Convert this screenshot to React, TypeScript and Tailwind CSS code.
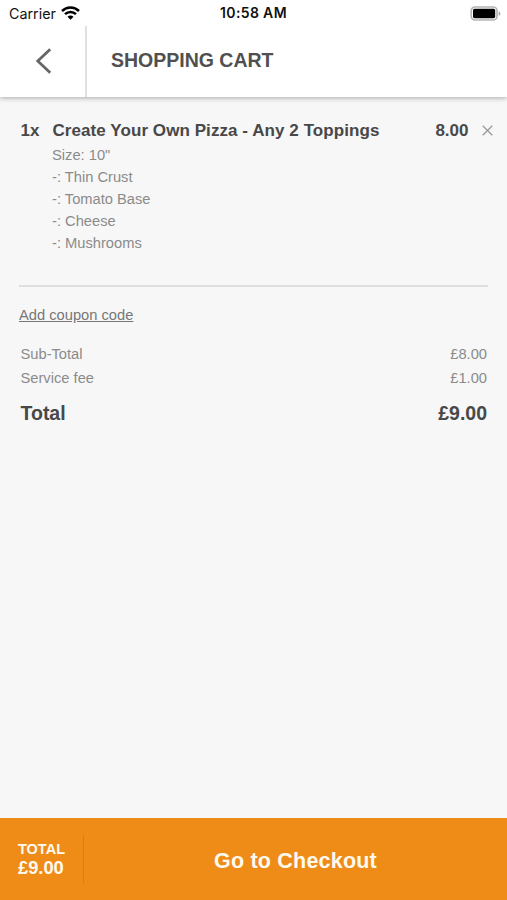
import React from 'react';

const options = ['Size: 10"', '-: Thin Crust', '-: Tomato Base', '-: Cheese', '-: Mushrooms'];

const fees = [
  { name: 'Sub-Total', amount: '£8.00' },
  { name: 'Service fee', amount: '£1.00' },
];

const total = '£9.00';

function WifiIcon() {
  return (
    <svg width="19" height="14" viewBox="0 0 19 14" fill="none" stroke="#000" strokeWidth="2.5">
      <path d="M1 5C5.8.4 13.2.4 18 5" />
      <path d="M4 8.2C7.1 5.2 11.9 5.2 15 8.2" />
      <path d="M6.5 10.7C8.2 9.2 10.8 9.2 12.5 10.7L9.5 13.7Z" fill="#000" stroke="none" />
    </svg>
  );
}

function BatteryIcon() {
  return (
    <svg width="32" height="15" viewBox="0 0 32 15">
      <rect x="1.2" y="1" width="25.8" height="13" rx="3.8" fill="#fff" stroke="#b4b4b4" strokeWidth="1.7" />
      <rect x="3" y="2.8" width="22.2" height="9.4" rx="1.6" fill="#000" />
      <path d="M28.6 5.2C31 6 31 9 28.6 9.8Z" fill="#aaa" />
    </svg>
  );
}

function StatusBar() {
  return (
    <div className="grid h-[26px] grid-cols-[1fr_auto_1fr] items-center px-[5px] font-['Inter',sans-serif] text-[14.3px] text-[#111]">
      <div className="flex items-center gap-[5px] pl-1">
        <span className="pt-[2px] leading-5">Carrier</span>
        <WifiIcon />
      </div>
      <span className="text-[14px] leading-5 font-semibold tracking-[0.35px] whitespace-nowrap">10:58 AM</span>
      <div className="flex justify-end">
        <BatteryIcon />
      </div>
    </div>
  );
}

export default function App() {
  return (
    <div className="flex h-[900px] w-[507px] flex-col overflow-hidden bg-[#f7f7f7] font-['Liberation_Sans',Arial,sans-serif] text-[#484848]">
      <header className="z-10 h-[97px] shrink-0 bg-white shadow-[0_1px_5px_rgba(0,0,0,0.32)]">
        <StatusBar />
        <div className="flex h-[71px]">
          <button className="flex h-full w-[87px] border-r-2 border-[#e0e0e0] pt-[22px] pl-[35px]">
            <svg width="18" height="26" viewBox="0 0 18 26" fill="none" stroke="#666" strokeWidth="2.8">
              <path d="M15.2 1.3L2.8 13L15.2 24.7" />
            </svg>
          </button>
          <h1 className="pt-[22px] pl-6 text-[19.5px] leading-6 font-bold text-[#505050]">SHOPPING CART</h1>
        </div>
      </header>

      <main className="flex-1 px-[19px] pt-[23px]">
        <section className="h-[165px]">
          <div className="flex items-center text-[17px] leading-[22px] font-bold">
            <span className="w-[33.5px] pl-[1.5px]">1x</span>
            <span className="flex-1 tracking-[0.07px] whitespace-nowrap">Create Your Own Pizza - Any 2 Toppings</span>
            <span>8.00</span>
            <button className="-mr-[5px] ml-[13.5px] pb-[2px]">
              <svg width="11" height="11" viewBox="0 0 11 11" stroke="#999" strokeWidth="1.3">
                <path d="M.7.7L10.3 10.3M10.3.7L.7 10.3" />
              </svg>
            </button>
          </div>
          <ul className="pt-[2px] pl-[33px] text-[14.7px] leading-[22px] text-[#8b8b8b]">
            {options.map((option) => (
              <li key={option}>{option}</li>
            ))}
          </ul>
        </section>

        <div className="h-0.5 bg-[#dedede]" />

        <div className="pt-[17px] text-[14.7px] leading-[22px] text-[#777]">
          <button className="underline">Add coupon code</button>
        </div>

        <div className="flex flex-col pt-4 pr-px pl-[1.5px]">
          {fees.map((fee) => (
            <div key={fee.name} className="flex justify-between text-[14.7px] leading-6 text-[#8b8b8b]">
              <span>{fee.name}</span>
              <span>{fee.amount}</span>
            </div>
          ))}
          <div className="flex justify-between pt-[11px] text-[19.5px] leading-6 font-bold">
            <span>Total</span>
            <span>{total}</span>
          </div>
        </div>
      </main>

      <footer className="flex h-[82px] shrink-0 items-center bg-[#ef8c18] font-bold text-[#fffaf0]">
        <div className="flex h-12 w-[84px] flex-col justify-center border-r border-[#dc7b14] pb-px pl-[18px]">
          <span className="text-[14.5px] leading-[18px]">TOTAL</span>
          <span className="text-[18.3px] leading-[19px]">{total}</span>
        </div>
        <button className="flex-1 pt-[3px] text-[21.5px] leading-6 tracking-[0.2px]">Go to Checkout</button>
      </footer>
    </div>
  );
}
